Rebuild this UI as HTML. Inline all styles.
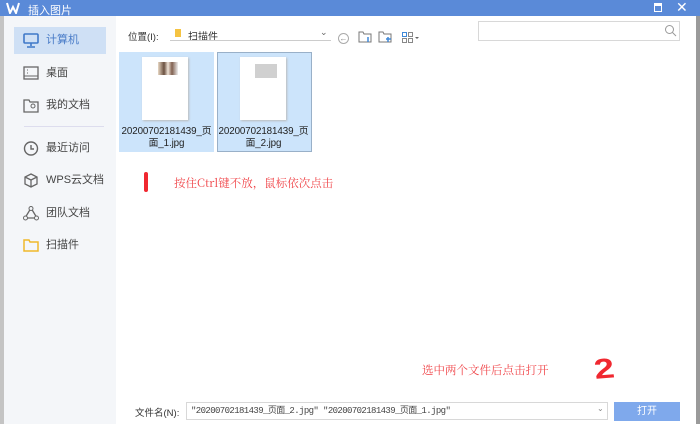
<!DOCTYPE html>
<html><head><meta charset="utf-8"><style>
*{margin:0;padding:0;box-sizing:border-box}
body{width:700px;height:424px;overflow:hidden;background:#fff;font-family:"Liberation Sans","Noto Sans CJK SC",sans-serif;font-size:10px;color:#333;position:relative}
.a{position:absolute}
.title{left:0;top:0;width:700px;height:16px;background:#5a8ad8;color:#fff;font-size:11px}
.side{left:4px;top:16px;width:112px;height:408px;background:#f4f6f9}
.si{position:absolute;left:10px;width:92px;height:27px;font-size:11px;color:#444;line-height:27px;padding-left:32px}
.ic{position:absolute;left:9px;top:6px;width:16px;height:15px}
.file{background:#cce4fb;width:95px;height:100px;top:52px}
.pg{position:absolute;left:23px;top:5px;width:46px;height:63px;background:#fff;box-shadow:1px 1px 2px #bbb}
.fn{position:absolute;left:-4px;top:74px;width:calc(100% + 8px);text-align:center;font-size:9.8px;line-height:12px;color:#222;white-space:nowrap;letter-spacing:-0.1px}
.red{color:#f0464a;font-family:"Noto Serif CJK SC","Liberation Serif",serif}
</style></head><body>
<div class="a title">
<svg class="a" style="left:6px;top:2px" width="14" height="12"><path d="M1 1 L4 11 L7 5 L10 11 L13 1" stroke="#fff" stroke-width="2" fill="none"/></svg>
<span class="a" style="left:28px;top:2px">插入图片</span>
<div class="a" style="left:654px;top:3px;width:8px;height:9px;border:1.5px solid #fff;border-top-width:3px"></div>
<span class="a" style="left:676px;top:-1px;font-size:14px">✕</span>
</div>
<div class="a" style="left:0;top:16px;width:4px;height:408px;background:#c4c4c4"></div>
<div class="a" style="left:696px;top:16px;width:4px;height:408px;background:#9a9a9a"></div>
<div class="a side">
<div class="si" style="top:11px;background:#cfe0f5;color:#4a7cc8"><svg class="ic" viewBox="0 0 16 15"><rect x="1" y="1" width="14" height="9" rx="1" fill="none" stroke="#3f78c8" stroke-width="1.6"/><path d="M8 10v3M4 14h8" stroke="#3f78c8" stroke-width="1.6"/></svg>计算机</div>
<div class="si" style="top:44px"><svg class="ic" viewBox="0 0 16 15"><rect x="1" y="1" width="14" height="12" fill="none" stroke="#666" stroke-width="1.3"/><path d="M4 4h1M4 7h1M1 10h14" stroke="#666"/></svg>桌面</div>
<div class="si" style="top:76px"><svg class="ic" viewBox="0 0 16 15"><path d="M1 2h5l1 2h8v10H1z" fill="none" stroke="#666" stroke-width="1.3"/><circle cx="10" cy="8" r="2" fill="none" stroke="#666"/></svg>我的文档</div>
<div class="a" style="left:20px;top:110px;width:80px;height:1px;background:#dde"></div>
<div class="si" style="top:119px"><svg class="ic" viewBox="0 0 16 15"><circle cx="8" cy="7.5" r="6.5" fill="none" stroke="#666" stroke-width="1.4"/><path d="M8 4v4h3" stroke="#666" stroke-width="1.4" fill="none"/></svg>最近访问</div>
<div class="si" style="top:151px"><svg class="ic" viewBox="0 0 16 15"><path d="M8 1l6 3v7l-6 3-6-3V4zM2 4l6 3 6-3M8 7v7" fill="none" stroke="#666" stroke-width="1.3"/></svg>WPS云文档</div>
<div class="si" style="top:184px"><svg class="ic" viewBox="0 0 16 15"><path d="M8 2l6 10H2z" fill="none" stroke="#666" stroke-width="1.3"/><circle cx="8" cy="2.5" r="2" fill="#f4f6f9" stroke="#666"/><circle cx="2.5" cy="12" r="2" fill="#f4f6f9" stroke="#666"/><circle cx="13.5" cy="12" r="2" fill="#f4f6f9" stroke="#666"/></svg>团队文档</div>
<div class="si" style="top:216px"><svg class="ic" viewBox="0 0 16 15"><path d="M1 2h5l1 2h8v9H1z" fill="none" stroke="#f0b82a" stroke-width="1.5"/></svg>扫描件</div>
</div>
<span class="a" style="left:128px;top:29px;font-size:9.5px">位置(I):</span>
<div class="a" style="left:175px;top:29px;width:6px;height:8px;background:#f5c342"></div>
<span class="a" style="left:188px;top:28px;font-size:10px">扫描件</span>
<div class="a" style="left:170px;top:40px;width:161px;height:1px;background:#ccc"></div>
<span class="a" style="left:320px;top:27px;font-size:9px;color:#666">⌄</span>
<div class="a" style="left:338px;top:33px;width:11px;height:11px;border:1px solid #aaa;border-radius:50%;font-size:8px;line-height:9px;text-align:center;color:#888">←</div>
<svg class="a" style="left:358px;top:31px" width="14" height="12"><path d="M1 1h4l1 2h7v8H1z" fill="none" stroke="#777"/><path d="M10 6v5" stroke="#3f88d8" stroke-width="1.5"/></svg>
<svg class="a" style="left:378px;top:31px" width="14" height="12"><path d="M1 1h4l1 2h7v8H1z" fill="none" stroke="#777"/><path d="M10 6v5M8 8h5" stroke="#3f88d8" stroke-width="1.5"/></svg>
<svg class="a" style="left:402px;top:32px" width="18" height="11"><rect x="0.5" y="0.5" width="4" height="4" fill="none" stroke="#3f88d8"/><rect x="6.5" y="0.5" width="4" height="4" fill="none" stroke="#888"/><rect x="0.5" y="6.5" width="4" height="4" fill="none" stroke="#888"/><rect x="6.5" y="6.5" width="4" height="4" fill="none" stroke="#888"/><path d="M13 5h4l-2 2z" fill="#666"/></svg>
<div class="a" style="left:478px;top:21px;width:202px;height:20px;border:1px solid #d8d8d8"></div>
<svg class="a" style="left:664px;top:24px" width="13" height="13"><circle cx="5.5" cy="5.5" r="4" fill="none" stroke="#999"/><path d="M8.5 8.5l3.5 3.5" stroke="#999"/></svg>
<div class="a file" style="left:119px"><div class="pg"><div class="a" style="left:16px;top:5px;width:20px;height:13px;background:linear-gradient(90deg,#e8d8c4,#6a5040 30%,#f0e4d8 50%,#806050 70%,#eee)"></div></div><div class="fn">20200702181439_页<br>面_1.jpg</div></div>
<div class="a file" style="left:217px;border:1px solid #99b0c8"><div class="pg" style="left:22px;top:4px"><div class="a" style="left:15px;top:7px;width:22px;height:14px;background:#d0d0d0"></div></div><div class="fn" style="top:73px;left:-5px">20200702181439_页<br>面_2.jpg</div></div>
<div class="a" style="left:144px;top:172px;width:4px;height:20px;background:#f02830;border-radius:2px"></div>
<span class="a red" style="left:174px;top:175px;font-size:11.5px">按住Ctrl键不放，鼠标依次点击</span>
<span class="a red" style="left:422px;top:362px;font-size:11.5px">选中两个文件后点击打开</span>
<span class="a" style="left:592px;top:354px;font-size:28px;font-weight:bold;color:#f02830;font-family:'Liberation Sans',sans-serif;transform:scaleX(1.3) rotate(-6deg);transform-origin:left top">2</span>
<span class="a" style="left:135px;top:405px;font-size:9.5px">文件名(N):</span>
<div class="a" style="left:186px;top:402px;width:422px;height:18px;border:1px solid #d8d8d8;font-size:9px;line-height:16px;padding-left:4px;color:#444;font-family:'Liberation Mono','Noto Sans CJK SC',monospace;letter-spacing:-0.6px">"20200702181439_页面_2.jpg" "20200702181439_页面_1.jpg"</div>
<span class="a" style="left:597px;top:404px;font-size:8px;color:#888">⌄</span>
<div class="a" style="left:614px;top:402px;width:66px;height:19px;background:#7fa9ec;color:#fff;text-align:center;line-height:19px;font-size:10px">打开</div>
</body></html>
